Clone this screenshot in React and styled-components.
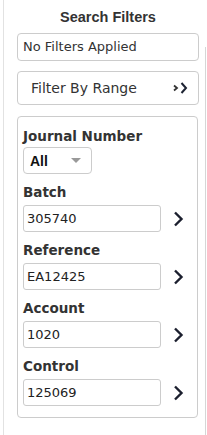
import React from 'react'
import styled, { createGlobalStyle } from 'styled-components'

const GlobalStyle = createGlobalStyle`
  html, body {
    margin: 0;
    padding: 0;
    background: #fff;
  }
  body {
    font-family: "DejaVu Sans", Verdana, sans-serif;
    color: #333;
  }
`

const FILTERS = [
  { label: 'Batch', value: '305740' },
  { label: 'Reference', value: 'EA12425' },
  { label: 'Account', value: '1020' },
  { label: 'Control', value: '125069' },
]

export default function App() {
  return (
    <>
      <GlobalStyle />
      <Page>
        <Sidebar>
          <Heading>Search Filters</Heading>
          <Summary>No Filters Applied</Summary>
          <RangeButton>
            Filter By Range
            <DoubleChevron />
          </RangeButton>
          <Panel>
            <Group>
              <Label>Journal Number</Label>
              <Select>
                All
                <Caret />
              </Select>
            </Group>
            {FILTERS.map((f) => (
              <Group key={f.label}>
                <Label>{f.label}</Label>
                <InputRow>
                  <TextInput defaultValue={f.value} />
                  <GoButton aria-label={`Search ${f.label}`}>
                    <Chevron />
                  </GoButton>
                </InputRow>
              </Group>
            ))}
          </Panel>
        </Sidebar>
        <RightRail />
      </Page>
    </>
  )
}

///////////////////////////////////////////////////////////////////////////////////

const Page = styled.div`
  display: flex;
  height: 435px;
  padding-left: 3px;
  overflow: hidden;
`

const Sidebar = styled.div`
  box-sizing: border-box;
  flex-shrink: 0;
  display: flex;
  flex-direction: column;
  width: 202px;
  border-left: 1px solid #e2e2e2;
  padding: 7px 6px 0 13px;
`

const RightRail = styled.div`
  margin-top: 47px;
  flex: 1;
  border-left: 1px solid #d6d6d6;
`

///////////////////////////////////////////////////////////////////////////////////

const Heading = styled.h1`
  margin: 0 0 6px;
  font-family: "Liberation Sans", Arial, sans-serif;
  font-size: 14.5px;
  font-weight: 700;
  line-height: 20px;
  text-align: center;
  color: #333;
`

const Summary = styled.div`
  box-sizing: border-box;
  height: 28px;
  padding: 0 5px;
  border: 1px solid #ccc;
  border-radius: 4px;
  font-size: 13px;
  line-height: 26px;
  color: #333;
`

const RangeButton = styled.div`
  box-sizing: border-box;
  display: flex;
  align-items: center;
  justify-content: space-between;
  height: 34px;
  margin-top: 10px;
  padding: 0 10px 0 13px;
  border: 1px solid #ccc;
  border-radius: 4px;
  font-size: 14px;
  color: #333;
`

function DoubleChevron() {
  return (
    <svg width="15" height="12" viewBox="0 0 15 12" aria-hidden="true">
      <path d="M1 3.5 L4 6 L1 8.5" fill="none" stroke="#333" strokeWidth="1.8" />
      <path d="M8.5 1 L13 6 L8.5 11" fill="none" stroke="#1d2333" strokeWidth="2" />
    </svg>
  )
}

///////////////////////////////////////////////////////////////////////////////////

const Panel = styled.div`
  box-sizing: border-box;
  display: flex;
  flex-direction: column;
  gap: 9px;
  width: 181px;
  margin-top: 11px;
  padding: 10px 6px 11px 5px;
  border: 1px solid #ccc;
  border-radius: 4px;
`

const Group = styled.div`
  display: flex;
  flex-direction: column;
  gap: 4px;

  &:first-child {
    gap: 2px;
  }
`

const Label = styled.div`
  font-size: 13.5px;
  font-weight: 700;
  line-height: 18px;
  color: #333;
`

const Select = styled.div`
  box-sizing: border-box;
  display: flex;
  align-items: center;
  justify-content: space-between;
  width: 69px;
  height: 27px;
  padding: 0 10px 0 6px;
  border: 1px solid #ccc;
  border-radius: 4px;
  font-family: "Liberation Sans", Arial, sans-serif;
  font-size: 14px;
  font-weight: 700;
  color: #111;
`

const Caret = styled.span`
  width: 0;
  height: 0;
  border-left: 5px solid transparent;
  border-right: 5px solid transparent;
  border-top: 5px solid #999;
`

const InputRow = styled.div`
  display: flex;
  align-items: center;
  gap: 11px;
`

const TextInput = styled.input`
  box-sizing: border-box;
  width: 138px;
  height: 27px;
  padding: 0 3px;
  border: 1px solid #ccc;
  border-radius: 3px;
  font-family: "DejaVu Sans", Verdana, sans-serif;
  font-size: 13px;
  color: #222;
  outline: none;
`

const GoButton = styled.button`
  display: flex;
  align-items: center;
  justify-content: center;
  width: 12px;
  height: 27px;
  padding: 0;
  border: 0;
  background: transparent;
`

function Chevron() {
  return (
    <svg width="11" height="16" viewBox="0 0 11 16" aria-hidden="true">
      <path d="M2 1.5 L8.5 8 L2 14.5" fill="none" stroke="#1b1f2e" strokeWidth="2.4" />
    </svg>
  )
}
